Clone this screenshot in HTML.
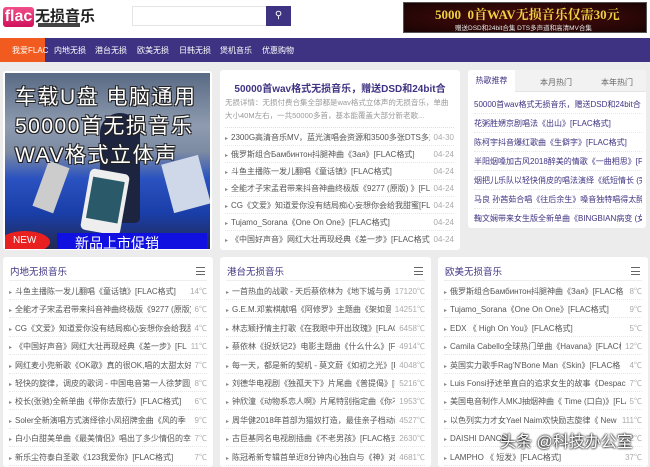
<!DOCTYPE html>
<html><head><meta charset="utf-8"><style>
*{margin:0;padding:0;box-sizing:border-box}
body{width:650px;height:463px;overflow:hidden;background:#ececec;font-family:"Liberation Sans","Noto Sans CJK SC",sans-serif;font-size:9px;color:#444;position:relative}
.abs{position:absolute}
.hdr{left:0;top:0;width:650px;height:38px;background:#fff}
.nav{left:0;top:38px;width:650px;height:24px;background:#3e3382}
.nav span{position:absolute;top:7px;color:#fff;font-size:8px}
.box{background:#fff;border-radius:3px}
.row{position:absolute;left:0;right:0;height:17px;line-height:17px;border-bottom:1px dotted #e6e6e6;white-space:nowrap;overflow:hidden;font-size:8px;color:#555}
.row b{font-weight:normal;color:#888;font-size:6px;margin-right:3px}
.row i{font-style:normal;position:absolute;right:0;top:0;background:#fff;padding-left:4px;color:#aaa}
.ttl{color:#3e3382;font-size:9.5px}
.menu{position:absolute;right:8px;top:10px;width:9px;height:8px;border-top:1px solid #666;border-bottom:1px solid #666}
.menu:after{content:"";position:absolute;left:0;right:0;top:3px;border-top:1px solid #666}
.big{color:#fff;font-size:21px;letter-spacing:1.5px;text-shadow:-1px -1px 0 #222,1px -1px 0 #222,-1px 1px 0 #222,1px 1px 0 #222;white-space:nowrap}
</style></head><body>
<div class="abs hdr"></div>
<div class="abs" style="left:3px;top:7px;width:31px;height:20px;background:linear-gradient(#f0508a,#d0105a);border-radius:3px;color:#fff;font-weight:bold;font-size:16px;line-height:19px;text-align:center">flac</div>
<div class="abs" style="left:35px;top:5px;font-size:15px;font-weight:bold;color:#222">无损音乐</div>
<div class="abs" style="left:38px;top:23px;width:42px;height:4px;background:#444"></div>
<div class="abs" style="left:132px;top:6px;width:135px;height:20px;border:1px solid #e4e4e4;background:#fff"></div>
<div class="abs" style="left:266px;top:6px;width:25px;height:20px;background:#3e3382;color:#fff;text-align:center;font-size:10px;line-height:20px">&#9906;</div>
<div class="abs" style="left:403px;top:2px;width:244px;height:31px;background:radial-gradient(ellipse at center,#4a0c0c,#1a0404);border:1px solid #555"></div>
<div class="abs" style="left:435px;top:4px;color:#f0d040;font-size:13px;font-weight:bold;font-family:'Liberation Serif','Noto Serif CJK SC',serif;white-space:nowrap">5000&nbsp;&nbsp;0首WAV无损音乐仅需30元</div>
<div class="abs" style="left:455px;top:22px;color:#e8e8e8;font-size:6.5px;white-space:nowrap">赠送DSD和24bit合集 DTS多声道和高清MV合集</div>
<div class="abs nav"></div>
<div class="abs" style="left:0;top:38px;width:45px;height:24px;background:#f25b1f"></div>
<div class="abs nav" style="background:none">
<span style="left:12px">我爱FLAC</span><span style="left:54px">内地无损</span><span style="left:95px">港台无损</span><span style="left:137px">欧美无损</span><span style="left:179px">日韩无损</span><span style="left:220px">煲机音乐</span><span style="left:262px">优惠购物</span></div>

<div class="abs box" style="left:3px;top:71px;width:209px;height:179px"></div>
<div class="abs" style="left:5px;top:73px;width:205px;height:176px;background:linear-gradient(180deg,#5a6a84 0%,#8e9bb0 30%,#7c8aa2 45%,#2a52c0 60%,#1a3ea8 80%,#222a50 100%);overflow:hidden">
<div class="abs" style="left:95px;top:40px;width:40px;height:110px;background:#1c2440;border-radius:20px 20px 5px 5px"></div>
<div class="abs" style="left:80px;top:98px;width:40px;height:62px;background:#eee;border-radius:5px;transform:rotate(10deg)"><div style="margin:8px 4px;height:42px;background:#2a5a6a"></div></div>
<div class="abs" style="left:35px;top:90px;width:22px;height:48px;background:#ccc;transform:rotate(20deg)"></div>
<div class="abs" style="left:162px;top:86px;width:38px;height:50px;background:#cfd8e8;transform:rotate(-15deg)"></div>
<div class="abs" style="left:52px;top:160px;width:150px;height:16px;background:#1010e0"></div>
<div class="abs" style="left:-5px;top:158px;width:50px;height:22px;background:#e82020;border-radius:50%"></div>
<div class="abs" style="left:8px;top:162px;color:#fff;font-size:10px">NEW</div>
<div class="abs" style="left:70px;top:160px;color:#fff;font-size:14px">新品上市促销</div>
<div class="abs big" style="left:10px;top:8px">车载U盘 电脑通用</div>
<div class="abs big" style="left:10px;top:37px">50000首无损音乐</div>
<div class="abs big" style="left:10px;top:66px">WAV格式立体声</div>
</div>

<div class="abs box" style="left:220px;top:70px;width:240px;height:180px">
<div class="abs" style="left:0;right:0;top:10px;text-align:center;color:#3e3382;font-size:10px;font-weight:bold;white-space:nowrap">50000首wav格式无损音乐，赠送DSD和24bit合</div>
<div class="abs" style="left:5px;right:6px;top:26px;color:#999;font-size:7.5px;line-height:13px">无损详情：无损付费合集全部都是wav格式立体声的无损音乐，单曲大小40M左右，一共50000多首，基本能覆盖大部分新老歌...</div>
<div class="abs" style="left:5px;right:6px;top:51px;height:128px">
<div class="abs" style="left:0;right:0;top:6px;border-top:1px dotted #ddd"></div>
<div class="row" style="top:8px"><b>▸</b>2300G高清音乐MV，蓝光演唱会资源和3500多张DTS多声<i>04-30</i></div>
<div class="row" style="top:25px"><b>▸</b>俄罗斯组合Бамбинтон抖腿神曲《Зая》[FLAC格式]<i>04-24</i></div>
<div class="row" style="top:42px"><b>▸</b>斗鱼主播陈一发儿翻唱《童话镇》[FLAC格式]<i>04-24</i></div>
<div class="row" style="top:59px"><b>▸</b>全能才子宋孟君带来抖音神曲终极版《9277 (原版) 》[FLAC<i>04-24</i></div>
<div class="row" style="top:76px"><b>▸</b>CG《文爱》知道爱你没有结局痴心妄想你会给我甜蜜[FLAC<i>04-24</i></div>
<div class="row" style="top:93px"><b>▸</b>Tujamo_Sorana《One On One》[FLAC格式]<i>04-24</i></div>
<div class="row" style="top:110px;border:0"><b>▸</b>《中国好声音》网红大壮再现经典《差一步》[FLAC格式]<i>04-24</i></div>
</div></div>

<div class="abs box" style="left:468px;top:70px;width:178px;height:158px;overflow:hidden">
<div class="abs" style="left:0;top:0;width:47px;height:22px;background:#fff;color:#3e3382;text-align:center;line-height:22px;font-size:8px">热歌推荐</div>
<div class="abs" style="left:47px;top:0;width:131px;height:22px;background:#f2f2f2;border-bottom:1px solid #e4e4e4"></div>
<div class="abs" style="left:72px;top:7px;color:#666;font-size:8px">本月热门</div>
<div class="abs" style="left:133px;top:7px;color:#666;font-size:8px">本年热门</div>
<div class="abs" style="left:6px;right:4px;top:25px">
<div class="row" style="top:0;height:19px;line-height:19px;color:#3e3382">50000首wav格式无损音乐，赠送DSD和24bit合</div>
<div class="row" style="top:19px;height:19px;line-height:19px;color:#3e3382">花粥胜娚京剧唱法《出山》[FLAC格式]</div>
<div class="row" style="top:38px;height:19px;line-height:19px;color:#3e3382">陈柯宇抖音爆红歌曲《生僻字》[FLAC格式]</div>
<div class="row" style="top:57px;height:19px;line-height:19px;color:#3e3382">半阳烟嗓加古风2018醉美的情歌《一曲相思》[FL</div>
<div class="row" style="top:76px;height:19px;line-height:19px;color:#3e3382">烟把儿乐队以轻快俏皮的唱法演绎《纸短情长 (完</div>
<div class="row" style="top:95px;height:19px;line-height:19px;color:#3e3382">马良 孙茜茹合唱《往后余生》嗓音独特唱得太醉</div>
<div class="row" style="top:114px;height:19px;line-height:19px;color:#3e3382;border:0">鞠文娴带来女生版全新单曲《BINGBIAN病变 (女</div>
</div></div>

<div class="abs box" style="left:3px;top:257px;width:210px;height:210px">
<div class="abs ttl" style="left:7px;top:7px">内地无损音乐</div><div class="menu"></div>
<div class="abs" style="left:6px;right:6px;top:23px;border-top:1px solid #eee"></div>
<div class="abs" style="left:6px;right:6px;top:26px">
<div class="row" style="top:0"><b>▸</b>斗鱼主播陈一发儿翻唱《童话镇》[FLAC格式]<i>14℃</i></div>
<div class="row" style="top:18.4px"><b>▸</b>全能才子宋孟君带来抖音神曲终极版《9277 (原版)<i>6℃</i></div>
<div class="row" style="top:36.8px"><b>▸</b>CG《文爱》知道爱你没有结局痴心妄想你会给我甜<i>4℃</i></div>
<div class="row" style="top:55.2px"><b>▸</b>《中国好声音》网红大壮再现经典《差一步》[FLAC<i>11℃</i></div>
<div class="row" style="top:73.6px"><b>▸</b>网红麦小兜新歌《OK歌》真的很OK,唱的太甜太好听<i>7℃</i></div>
<div class="row" style="top:92px"><b>▸</b>轻快的旋律，调皮的歌词 - 中国电音第一人徐梦圆_<i>8℃</i></div>
<div class="row" style="top:110.4px"><b>▸</b>校长(张驰)全新单曲《带你去旅行》[FLAC格式]<i>6℃</i></div>
<div class="row" style="top:128.8px"><b>▸</b>Soler全新演唱方式演绎徐小凤招牌金曲《风的季<i>9℃</i></div>
<div class="row" style="top:147.2px"><b>▸</b>白小白甜美单曲《最美情侣》唱出了多少情侣的幸福<i>7℃</i></div>
<div class="row" style="top:165.6px"><b>▸</b>新乐尘符泰白圣歌《123我爱你》[FLAC格式]<i>7℃</i></div>
</div></div>

<div class="abs box" style="left:220px;top:257px;width:211px;height:210px">
<div class="abs ttl" style="left:7px;top:7px">港台无损音乐</div><div class="menu"></div>
<div class="abs" style="left:6px;right:6px;top:23px;border-top:1px solid #eee"></div>
<div class="abs" style="left:6px;right:6px;top:26px">
<div class="row" style="top:0"><b>▸</b>一首热血的战歌 - 天后蔡依林为《地下城与勇<i>17120℃</i></div>
<div class="row" style="top:18.4px"><b>▸</b>G.E.M.邓紫棋献唱《阿修罗》主题曲《架如意》<i>14251℃</i></div>
<div class="row" style="top:36.8px"><b>▸</b>林志颖抒情主打歌《在我眼中开出玫瑰》[FLAC<i>6458℃</i></div>
<div class="row" style="top:55.2px"><b>▸</b>蔡依林《捉妖记2》电影主题曲《什么什么》[FL<i>4914℃</i></div>
<div class="row" style="top:73.6px"><b>▸</b>每一天，都是新的契机 - 莫文蔚《如初之光》[FL<i>4048℃</i></div>
<div class="row" style="top:92px"><b>▸</b>刘德华电视剧《独孤天下》片尾曲《普提偈》[FL<i>5216℃</i></div>
<div class="row" style="top:110.4px"><b>▸</b>钟欣潼《动物系恋人啊》片尾特别指定曲《你不<i>1953℃</i></div>
<div class="row" style="top:128.8px"><b>▸</b>周华健2018年首部为猫奴打造，最佳亲子档动画<i>4527℃</i></div>
<div class="row" style="top:147.2px"><b>▸</b>古巨基同名电视剧插曲《不老男孩》[FLAC格式]<i>2630℃</i></div>
<div class="row" style="top:165.6px"><b>▸</b>陈冠希新专辑首单近8分钟内心独白与《神》对话<i>4681℃</i></div>
</div></div>

<div class="abs box" style="left:438px;top:257px;width:210px;height:210px">
<div class="abs ttl" style="left:7px;top:7px">欧美无损音乐</div><div class="menu"></div>
<div class="abs" style="left:6px;right:6px;top:23px;border-top:1px solid #eee"></div>
<div class="abs" style="left:6px;right:6px;top:26px">
<div class="row" style="top:0"><b>▸</b>俄罗斯组合Бамбинтон抖腿神曲《Зая》[FLAC格<i>8℃</i></div>
<div class="row" style="top:18.4px"><b>▸</b>Tujamo_Sorana《One On One》[FLAC格式]<i>9℃</i></div>
<div class="row" style="top:36.8px"><b>▸</b>EDX 《 High On You》[FLAC格式]<i>5℃</i></div>
<div class="row" style="top:55.2px"><b>▸</b>Camila Cabello全球热门单曲《Havana》[FLAC格<i>12℃</i></div>
<div class="row" style="top:73.6px"><b>▸</b>英国实力歌手Rag'N'Bone Man《Skin》[FLAC格<i>4℃</i></div>
<div class="row" style="top:92px"><b>▸</b>Luis Fonsi抒述单直白的追求女生的故事《Despacit<i>7℃</i></div>
<div class="row" style="top:110.4px"><b>▸</b>美国电音制作人MKJ抽烟神曲《 Time (口白)》[FLA<i>5℃</i></div>
<div class="row" style="top:128.8px"><b>▸</b>以色列实力才女Yael Naim欢快励志旋律《 New S<i>111℃</i></div>
<div class="row" style="top:147.2px"><b>▸</b>DAISHI DANCE<i>2℃</i></div>
<div class="row" style="top:165.6px"><b>▸</b>LAMPHO 《 短发》[FLAC格式]<i>37℃</i></div>
</div></div>
<div class="abs" style="left:500px;top:428px;color:#fff;font-size:16px;white-space:nowrap;text-shadow:0 0 2px #000,0 0 2px #000">头条 @科技办公室</div>
</body></html>
